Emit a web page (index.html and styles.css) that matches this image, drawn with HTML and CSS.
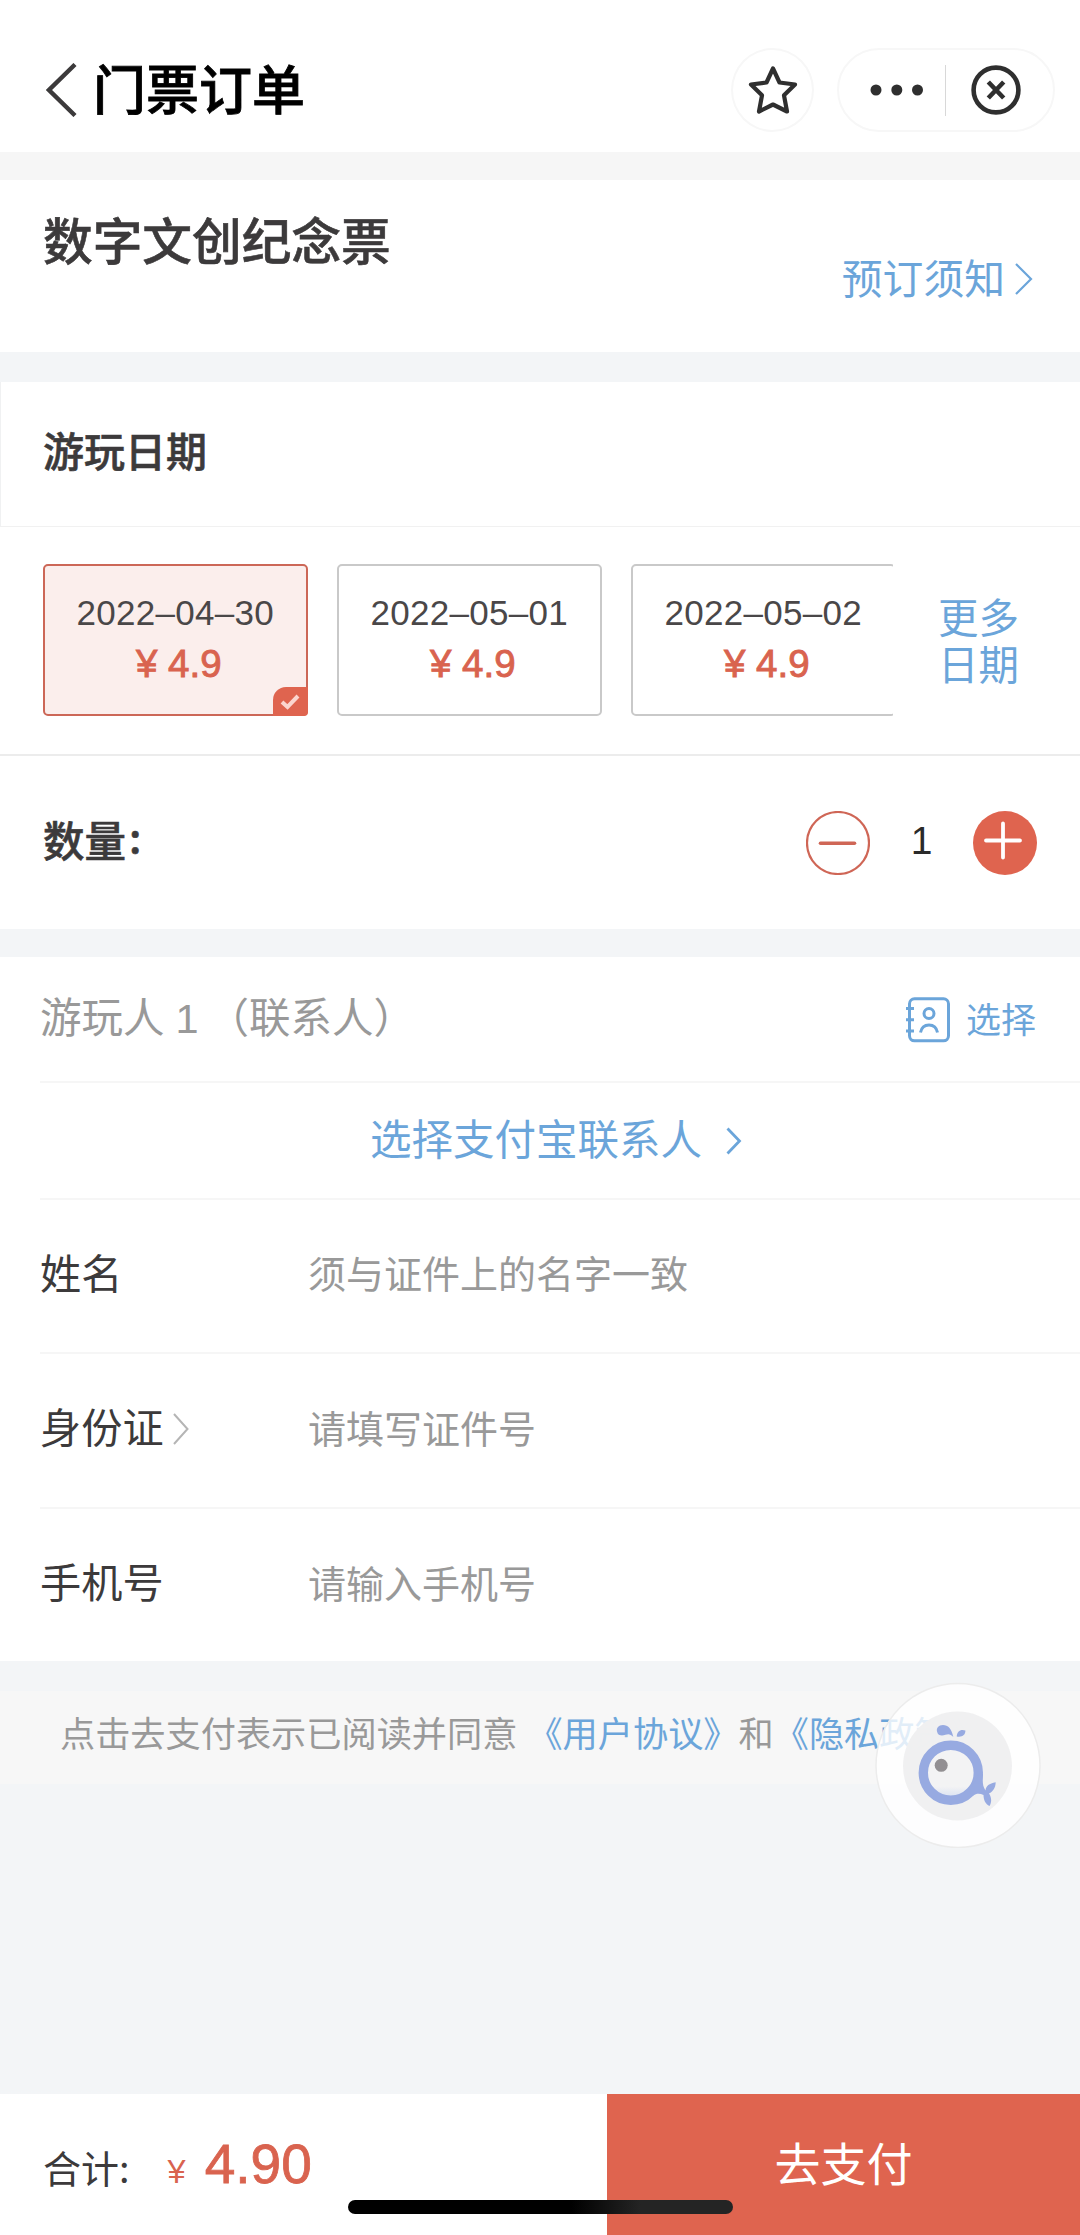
FILE: index.html
```html
<!DOCTYPE html>
<html lang="zh-CN">
<head>
<meta charset="utf-8">
<title>门票订单</title>
<link rel="stylesheet" href="styles.css">
</head>
<body>
<div class="page">
  <header class="nav">
    <svg class="nav-back" width="32" height="54" viewBox="0 0 32 54"><path d="M29 1.500L3 27L29 52.500" fill="none" stroke="#3c3a3b" stroke-width="4.400"/></svg>
    <h1 class="nav-title">门票订单</h1>
    <button class="nav-star" aria-label="收藏">
      <svg width="50" height="50" viewBox="0 0 50 50"><path d="M25 3.500L31.500 17.500L47 19.500L36 30.300L39 46.500L25 39.500L11 46.500L14 30.300L3 19.500L18.500 17.500Z" fill="none" stroke="#2f2f2f" stroke-width="4.200" stroke-linejoin="round"/></svg>
    </button>
    <div class="nav-capsule">
      <svg class="dots" width="54" height="12" viewBox="0 0 54 12" fill="#2f2f2f"><circle cx="6" cy="6" r="5.500"/><circle cx="26.800" cy="6" r="5.500"/><circle cx="47.500" cy="6" r="5.500"/></svg>
      <span class="capsule-line"></span>
      <svg class="close" width="50" height="50" viewBox="0 0 50 50" fill="none" stroke="#2f2f2f"><circle cx="25" cy="25" r="22.400" stroke-width="4.600"/><path d="M17.300 17L32.700 33M32.700 17L17.300 33" stroke-width="4.600"/></svg>
    </div>
  </header>

  <section class="ticket">
    <h2 class="ticket-name">数字文创纪念票</h2>
    <a class="notice">预订须知<svg width="18" height="34" viewBox="0 0 18 34"><path d="M1 2L16 17L1 32" fill="none" stroke="#6ba5da" stroke-width="2.200"/></svg></a>
  </section>

  <section class="dates">
    <h3 class="dates-title">游玩日期</h3>
    <div class="dates-row">
      <div class="date-scroll">
        <div class="date-card selected">
          <span class="day">2022–04–30</span><span class="price">¥ 4.9</span>
          <span class="tick"><svg width="20" height="18" viewBox="0 0 20 18"><path d="M2 9L7.500 14L18 3" fill="none" stroke="#fbd5ce" stroke-width="4"/></svg></span>
        </div>
        <div class="date-card"><span class="day">2022–05–01</span><span class="price">¥ 4.9</span></div>
        <div class="date-card"><span class="day">2022–05–02</span><span class="price">¥ 4.9</span></div>
      </div>
      <a class="more">更多<br>日期</a>
    </div>
    <div class="count">
      <span class="count-label">数量<span class="colon">:</span></span>
      <div class="stepper">
        <svg width="64" height="64" viewBox="0 0 64 64"><circle cx="32" cy="32" r="31" fill="none" stroke="#cf6656" stroke-width="2.200"/><path d="M14.500 32.300H48.500" stroke="#cf6656" stroke-width="3.600" stroke-linecap="round"/></svg>
        <span class="count-num">1</span>
        <svg width="64" height="64" viewBox="0 0 64 64"><circle cx="32" cy="32" r="32" fill="#df644f"/><path d="M13 29.500H47M30 12.500V46.500" stroke="#fff" stroke-width="3.800" stroke-linecap="round"/></svg>
      </div>
    </div>
  </section>

  <section class="visitor">
    <div class="row head">
      <span class="who">游玩人<span class="num">1</span>（联系人）</span>
      <a class="pick">
        <svg width="46" height="46" viewBox="0 0 46 46" fill="none" stroke="#6ba5da" stroke-width="3"><rect x="4.500" y="1.800" width="39" height="42" rx="5"/><path d="M1 11.500H9M1 22.800H9M1 34H9"/><circle cx="24" cy="16.500" r="5"/><path d="M15.500 35.500C16.500 30.500 19.500 28 24 28C28.500 28 31.500 30.500 32.500 35.500"/></svg>
        选择
      </a>
    </div>
    <div class="row alipay">
      <a>选择支付宝联系人<svg width="16" height="28" viewBox="0 0 16 28"><path d="M1.500 1.500L13.500 14L1.500 26.500" fill="none" stroke="#6ba5da" stroke-width="2.800"/></svg></a>
    </div>
    <div class="row field name"><label>姓名</label><span class="hint">须与证件上的名字一致</span></div>
    <div class="row field idcard"><label>身份证<svg width="18" height="34" viewBox="0 0 18 34"><path d="M2 2L15.500 17L2 32" fill="none" stroke="#b5b5b5" stroke-width="2"/></svg></label><span class="hint">请填写证件号</span></div>
    <div class="row field phone"><label>手机号</label><span class="hint">请输入手机号</span></div>
  </section>

  <div class="agree">
    <p>点击去支付表示已阅读并同意<a class="first">《用户协议》</a>和<a>《隐私政策》</a></p>
  </div>

  <footer class="bar">
    <div class="total"><span class="sum-label">合计<span class="colon">:</span></span><span class="yen">¥</span><span class="amount">4.90</span></div>
    <button class="pay">去支付</button>
  </footer>

  <div class="assistant">
    <svg width="166" height="166" viewBox="0 0 166 166">
      <defs><linearGradient id="belly" x1="0" y1="0" x2="0" y2="1"><stop offset="0.750" stop-color="#f3f3f4"/><stop offset="1" stop-color="#d3def2"/></linearGradient></defs>
      <circle cx="83" cy="83.500" r="82" fill="#fff" fill-opacity="0.800" stroke="#ececec" stroke-width="1.500"/>
      <circle cx="82.500" cy="84" r="54.500" fill="#f0f0f1" fill-opacity="0.970"/>
      <circle cx="75.800" cy="90.700" r="27.500" fill="url(#belly)" stroke="#97aae1" stroke-width="9.400"/>
      <path d="M104 92L108 92C107.500 100 107.500 104 110.500 108.500C111 104 114 101.500 120.700 100.300C120.500 106 118 109.500 114 111.500C116.500 115 117 120 114.500 124C110.500 122 108.500 118 108.500 113C105 111.500 102 111 98 113.500L94 110Z" fill="#97aae1"/>
      <circle cx="66.200" cy="83.300" r="6.500" fill="#928f92"/>
      <path d="M78.300 55C76.500 46.500 73 43 68 43C63.500 43 61.200 46 62 49.500C63 54 67 54.200 70.500 52.800C73.500 51.800 75.500 52 78.300 55Z" fill="#97aae1"/>
      <path d="M81.700 54.500C82 49.500 85.500 46.800 90.400 48.500C90.500 53 87 55.500 81.700 54.500Z" fill="#97aae1"/>
    </svg>
  </div>
  <div class="home"></div>
</div>
</body>
</html>
```
FILE: styles.css
```css
* { box-sizing: border-box; }
body {
  margin: 0;
  background: #f3f5f7;
  font-family: "Noto Sans CJK SC", sans-serif;
  color: #3c3a3b;
}
h1, h2, h3, p { margin: 0; }
svg { display: block; flex: none; }
button { border: 0; padding: 0; font-family: inherit; }
a { color: #6ba5da; }

.page {
  position: relative;
  width: 1080px;
  height: 2235px;
  overflow: hidden;
  display: flex;
  flex-direction: column;
}

/* Top navigation */
.nav {
  height: 152px;
  padding: 28px 25px 0 46px;
  display: flex;
  align-items: center;
  background: #fff;
  position: relative;
  z-index: 1;
}
.nav-title {
  margin: -6px 0 0 15px;
  font-size: 53px;
  line-height: 70px;
  font-weight: 500;
  color: #000;
  -webkit-text-stroke: 0.800px #000;
}
.nav-star {
  width: 83px;
  height: 84px;
  margin-left: auto;
  border: 2px solid #f7f7f7;
  border-radius: 50%;
  background: #fff;
  display: flex;
  align-items: center;
  justify-content: center;
}
.nav-capsule {
  width: 218px;
  height: 84px;
  margin-left: 23px;
  border: 2px solid #f7f7f7;
  border-radius: 42px;
  display: flex;
  align-items: center;
  padding-left: 31px;
}
.capsule-line { width: 1px; height: 51px; margin: 0 25px 0 21px; background: #d8d8d8; }

/* Ticket name */
.ticket {
  height: 172px;
  margin-top: 28px;
  padding: 0 47px 0 43px;
  background: #fff;
  box-shadow: 0 -28px 0 #f6f6f6;
  display: flex;
  justify-content: space-between;
}
.ticket-name { margin-top: 28px; font-size: 49.700px; line-height: 60px; font-weight: 500; -webkit-text-stroke: 0.600px #3c3a3b; }
.notice { margin-top: 72px; height: 50px; font-size: 40.800px; line-height: 50px; display: flex; align-items: center; gap: 10px; }
.notice svg { margin-top: 4px; }

/* Date picker */
.dates { margin-top: 30px; background: #fff; }
.dates-title {
  height: 145px;
  padding-left: 42px;
  border-left: 1px solid #f0f1f2;
  border-bottom: 1px solid #f1f1f1;
  font-size: 41px;
  line-height: 134px;
  font-weight: 500;
  -webkit-text-stroke: 0.600px #3c3a3b;
}
.dates-row { height: 229px; border-bottom: 2px solid #ececec; display: flex; }
.date-scroll { width: 893px; padding: 37px 0 0 43px; overflow: hidden; display: flex; gap: 29.500px; }
.date-card {
  position: relative;
  flex: none;
  width: 264.500px;
  height: 152px;
  border: 2.500px solid #c9c9c9;
  border-radius: 5px;
  padding-top: 27px;
  font-family: "Liberation Sans", sans-serif;
  text-align: center;
}
.day, .price { display: block; }
.day { font-size: 35px; line-height: 40px; letter-spacing: 0.300px; color: #4a4748; }
.price { margin-top: 9px; padding-left: 7px; font-size: 38.500px; line-height: 44px; color: #d9634f; -webkit-text-stroke: 0.900px #d9634f; }
.selected { border-color: #cc6757; background: #fbeeec; }
.tick {
  position: absolute;
  right: -2px;
  bottom: -2px;
  width: 35px;
  height: 29px;
  border-radius: 13px 0 4px 0;
  background: #df644f;
  display: flex;
  align-items: center;
  justify-content: center;
}
.more { margin: 65px 0 0 45px; font-size: 40.500px; line-height: 47px; text-align: center; }

/* Quantity */
.count { height: 173px; padding: 1px 43px 0 43px; display: flex; justify-content: space-between; }
.count-label { font-size: 41.500px; line-height: 164px; font-weight: 500; -webkit-text-stroke: 0.600px #3c3a3b; }
.count-label .colon { margin-left: 3px; position: relative; top: -4px; }
.stepper { height: 64px; margin-top: 54px; display: flex; }
.count-num { width: 103px; font-family: "Liberation Sans", sans-serif; font-size: 39px; line-height: 59px; text-align: center; color: #2a2a2a; }

/* Visitor form */
.visitor { height: 704px; margin-top: 28px; padding-left: 40px; background: #fff; }
.row { border-bottom: 2px solid #f6f6f6; display: flex; }
.head { height: 126px; padding-right: 44px; justify-content: space-between; }
.who { font-size: 41.500px; line-height: 117px; color: #999; }
.num { margin: 0 9px 0 11px; font-family: "Liberation Sans", sans-serif; }
.pick { display: flex; align-items: center; gap: 15px; font-size: 35px; line-height: 121px; height: 121px; }
.pick svg { margin-top: 5px; }
.alipay { height: 117px; padding-left: 330px; font-size: 41.500px; line-height: 108px; }
.alipay a { display: flex; align-items: center; gap: 24px; height: 108px; }
.alipay svg { margin-top: 8px; }
.field { height: 154px; line-height: 145px; }
.field label { width: 268px; height: 143px; display: flex; align-items: center; font-size: 41.200px; line-height: 143px; gap: 8px; }
.field label svg { margin-top: 6px; }
.hint { font-size: 38px; color: #999; }
.name { line-height: 144px; }
.idcard { height: 155px; }
.phone { border: 0; }

/* Agreement line */
.agree {
  height: 93px;
  margin-top: 30px;
  padding-left: 60px;
  background: #f7f7f7;
  font-size: 35.200px;
  line-height: 81px;
  color: #999;
  white-space: nowrap;
}
.first { margin-left: 10px; }

/* Checkout bar */
.bar { height: 141px; margin-top: auto; background: #fff; display: flex; }
.total { width: 607px; padding-left: 43px; display: flex; align-items: baseline; line-height: 141px; }
.sum-label { font-size: 38px; }
.yen { margin-left: 38px; font-family: "Liberation Sans", sans-serif; font-size: 32.500px; color: #d9634f; }
.amount { margin-left: 19px; font-family: "Liberation Sans", sans-serif; font-size: 55px; color: #d9634f; -webkit-text-stroke: 0.800px #d9634f; }
.pay { flex: 1; padding-bottom: 8px; background: #df644f; color: #fff; font-size: 46px; }

/* Floating layers */
.assistant { position: absolute; left: 875px; top: 1682px; }
.home {
  position: absolute;
  left: 348px;
  bottom: 21px;
  width: 385px;
  height: 14px;
  border-radius: 7px;
  background: linear-gradient(90deg, #000 58%, #242424 76%);
}
```
